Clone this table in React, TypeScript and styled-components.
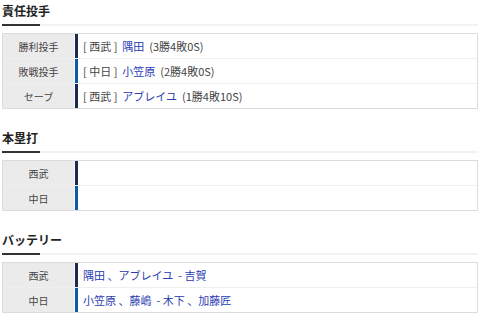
import styled, { createGlobalStyle } from "styled-components";

const GlobalStyle = createGlobalStyle`
  html, body {
    margin: 0;
    padding: 0;
    background: #fff;
  }
  body {
    font-family: "Noto Sans CJK JP", "Noto Sans", sans-serif;
    color: #333;
  }
`;

type Team = "seibu" | "chunichi";

type Row = {
  label: string;
  team: Team;
  content?: React.ReactNode;
};

const teamColors: Record<Team, string> = {
  seibu: "#1c2a4f",
  chunichi: "#0a5aa5",
};

const Page = styled.div`
  width: 476px;
  padding: 0 2px;
`;

const Section = styled.section<{ $first?: boolean }>`
  padding-top: ${(p) => (p.$first ? "2px" : "20px")};
`;

const Heading = styled.h2`
  position: relative;
  margin: 0;
  padding: 0 0 5px;
  font-size: 12px;
  line-height: 17px;
  font-weight: 700;
  color: #222;
  border-bottom: 2px solid #f2f2f2;

  &::after {
    content: "";
    position: absolute;
    left: 0;
    bottom: -2px;
    width: 38px;
    height: 2px;
    background: #333;
  }
`;

const Table = styled.div`
  margin-top: 7px;
  border: 1px solid #dcdcdc;
`;

const TableRow = styled.div`
  display: flex;
  height: 24px;
  & + & {
    border-top: 1px solid #efefef;
  }
`;

const Label = styled.div`
  width: 71px;
  flex: none;
  display: flex;
  align-items: center;
  justify-content: center;
  background: #ebebeb;
  font-size: 10px;
  color: #444;
  border-right: 1px solid #fafafa;
`;

const Cell = styled.div<{ $team: Team }>`
  flex: 1;
  display: flex;
  align-items: center;
  padding-left: 5px;
  border-left: 3px solid ${(p) => teamColors[p.$team]};
  font-size: 11px;
  color: #333;
  white-space: pre;
`;

const Name = styled.span`
  color: #2b3db3;
`;

const Muted = styled.span`
  color: #444;
`;

const pitchers: Row[] = [
  {
    label: "勝利投手",
    team: "seibu",
    content: (
      <>
        <Muted>[ 西武 ]  </Muted>
        <Name>隅田</Name>
        <Muted>  (3勝4敗0S)</Muted>
      </>
    ),
  },
  {
    label: "敗戦投手",
    team: "chunichi",
    content: (
      <>
        <Muted>[ 中日 ]  </Muted>
        <Name>小笠原</Name>
        <Muted>  (2勝4敗0S)</Muted>
      </>
    ),
  },
  {
    label: "セーブ",
    team: "seibu",
    content: (
      <>
        <Muted>[ 西武 ]  </Muted>
        <Name>アブレイユ</Name>
        <Muted>  (1勝4敗10S)</Muted>
      </>
    ),
  },
];

const homers: Row[] = [
  { label: "西武", team: "seibu" },
  { label: "中日", team: "chunichi" },
];

const battery: Row[] = [
  {
    label: "西武",
    team: "seibu",
    content: <Name>隅田 、アブレイユ  - 吉賀</Name>,
  },
  {
    label: "中日",
    team: "chunichi",
    content: <Name>小笠原 、藤嶋  - 木下 、加藤匠</Name>,
  },
];

function InfoTable({ rows }: { rows: Row[] }) {
  return (
    <Table>
      {rows.map((r, i) => (
        <TableRow key={i}>
          <Label>{r.label}</Label>
          <Cell $team={r.team}>{r.content}</Cell>
        </TableRow>
      ))}
    </Table>
  );
}

export default function App() {
  return (
    <>
      <GlobalStyle />
      <Page>
        <Section $first>
          <Heading>責任投手</Heading>
          <InfoTable rows={pitchers} />
        </Section>
        <Section>
          <Heading>本塁打</Heading>
          <InfoTable rows={homers} />
        </Section>
        <Section>
          <Heading>バッテリー</Heading>
          <InfoTable rows={battery} />
        </Section>
      </Page>
    </>
  );
}
